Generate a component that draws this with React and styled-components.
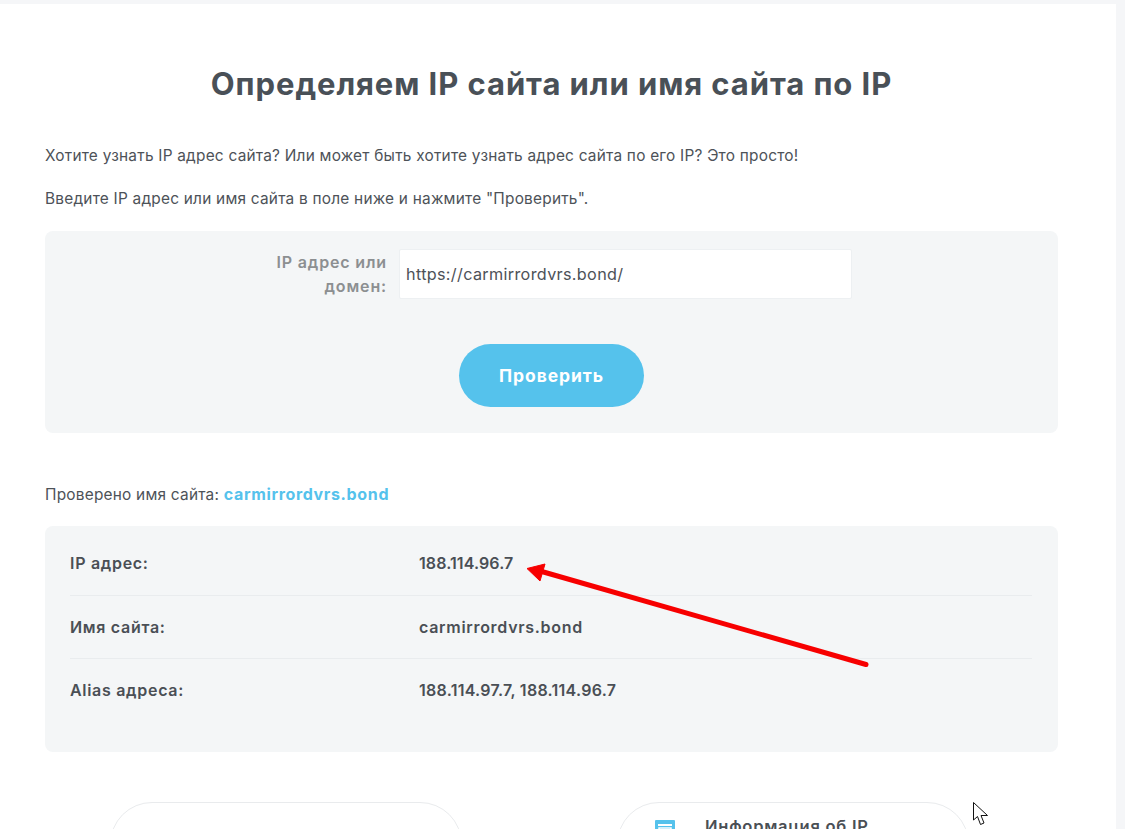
import React from "react";
import styled, { createGlobalStyle } from "styled-components";

const Global = createGlobalStyle`
  html, body { margin: 0; padding: 0; height: 829px; overflow: hidden; background: #f5f6f8; }
  * { box-sizing: border-box; }
`;

const Page = styled.div`
  position: relative;
  width: 1125px;
  height: 829px;
  overflow: hidden;
  padding: 4px 9px 0 0;
  font-family: Inter, "Noto Sans", sans-serif;
  color: #4a4f55;
`;

const Sheet = styled.main`
  background: #fff;
  height: 900px;
  padding: 61px 58px 0 45px;
`;

const Title = styled.h1`
  margin: 0 0 43px;
  text-align: center;
  font-size: 31px;
  letter-spacing: 0.92px;
  line-height: 38px;
  font-weight: 700;
  color: #495057;
`;

const Paragraph = styled.p`
  margin: 0 0 ${(p) => p.$gap || 0}px;
  font-size: 15.4px;
  letter-spacing: 0.23px;
  line-height: 20px;
  color: #4d5258;
`;

const FormPanel = styled.section`
  margin-top: 22px;
  height: 202px;
  background: #f4f6f7;
  border-radius: 8px;
  padding-top: 18px;
  display: flex;
  flex-direction: column;
  align-items: center;
`;

const FieldRow = styled.div`
  width: 100%;
  display: flex;
  align-items: flex-start;
  gap: 12px;
`;

const FieldLabel = styled.label`
  width: 342px;
  text-align: right;
  font-size: 16px;
  letter-spacing: 0.85px;
  line-height: 24px;
  font-weight: 600;
  color: #8c8f91;
  padding: 1px 0 0 200px;
`;

const FieldBox = styled.div`
  width: 453px;
  height: 50px;
  background: #fff;
  border: 1px solid #edf0f2;
  border-radius: 2px;
  padding: 0 6px;
  display: flex;
  align-items: center;
  font-size: 16.2px;
  letter-spacing: 0.33px;
  color: #4d5258;
`;

const SubmitButton = styled.button`
  margin-top: 45px;
  width: 185px;
  height: 63px;
  border: 0;
  border-radius: 32px;
  background: #55c2ec;
  color: #fff;
  font-family: inherit;
  font-size: 17.5px;
  letter-spacing: 0.9px;
  font-weight: 700;
`;

const Checked = styled.p`
  margin: 51px 0 0;
  font-size: 15.4px;
  letter-spacing: 0.23px;
  line-height: 20px;
  color: #4d5258;
`;

const CheckedName = styled.b`
  color: #55c2ec;
  font-size: 16px;
  letter-spacing: 0.65px;
  font-weight: 700;
`;

const ResultPanel = styled.section`
  margin-top: 21px;
  height: 226px;
  background: #f4f6f7;
  border-radius: 8px;
  padding: 6px 26px 0 25px;
`;

const ResultRow = styled.div`
  display: grid;
  grid-template-columns: 349px 1fr;
  align-items: center;
  height: 63.5px;
  border-bottom: 1px solid ${(p) => (p.$last ? "transparent" : "#e9ecee")};
`;

const ResultText = styled.span`
  font-size: 16px;
  font-weight: 600;
  letter-spacing: ${(p) => p.$spacing}px;
  color: #4a4f55;
`;

const Links = styled.div`
  margin: 50px 0 0 65px;
  display: flex;
  gap: 155px;
`;

const LinkCard = styled.div`
  width: 352px;
  height: 120px;
  border: 1px solid #e9ebed;
  border-radius: 42px;
  display: flex;
  align-items: flex-start;
  padding: 13px 0 0 37px;
  gap: 30px;
`;

const LinkIcon = styled.svg`
  margin-top: 4px;
  flex: none;
`;

const LinkText = styled.span`
  font-size: 16.5px;
  letter-spacing: 0.75px;
  line-height: 20px;
  font-weight: 600;
  color: #4a4f55;
`;

const Overlay = styled.svg`
  position: absolute;
  left: 0;
  top: 0;
  pointer-events: none;
`;

const DocIcon = () => (
  <LinkIcon width="20" height="24" viewBox="0 0 20 24" aria-hidden="true">
    <rect x="0" y="0" width="20" height="24" rx="1" fill="#55c2ec" />
    <rect x="3" y="4" width="14" height="2" fill="#fff" />
    <rect x="4" y="8" width="12" height="5" fill="none" stroke="#fff" strokeWidth="1.5" />
  </LinkIcon>
);

export default function App() {
  return (
    <Page>
      <Global />
      <Sheet>
        <Title>Определяем IP сайта или имя сайта по IP</Title>
        <Paragraph $gap={23}>
          Хотите узнать IP адрес сайта? Или может быть хотите узнать адрес сайта по его IP? Это просто!
        </Paragraph>
        <Paragraph>Введите IP адрес или имя сайта в поле ниже и нажмите "Проверить".</Paragraph>
        <FormPanel>
          <FieldRow>
            <FieldLabel>IP адрес или домен:</FieldLabel>
            <FieldBox>https://carmirrordvrs.bond/</FieldBox>
          </FieldRow>
          <SubmitButton>Проверить</SubmitButton>
        </FormPanel>
        <Checked>
          Проверено имя сайта: <CheckedName>carmirrordvrs.bond</CheckedName>
        </Checked>
        <ResultPanel>
          <ResultRow>
            <ResultText $spacing={0.7}>IP адрес:</ResultText>
            <ResultText $spacing={0.1}>188.114.96.7</ResultText>
          </ResultRow>
          <ResultRow>
            <ResultText $spacing={0.7}>Имя сайта:</ResultText>
            <ResultText $spacing={0.7}>carmirrordvrs.bond</ResultText>
          </ResultRow>
          <ResultRow $last>
            <ResultText $spacing={0.7}>Alias адреса:</ResultText>
            <ResultText $spacing={0.27}>188.114.97.7, 188.114.96.7</ResultText>
          </ResultRow>
        </ResultPanel>
        <Links>
          <LinkCard />
          <LinkCard>
            <DocIcon />
            <LinkText>Информация об IP</LinkText>
          </LinkCard>
        </Links>
      </Sheet>
      <Overlay width="1125" height="829" viewBox="0 0 1125 829">
        <path d="M866 664.5 L540 571" stroke="#f70000" strokeWidth="5" strokeLinecap="round" fill="none" />
        <path d="M527 568.5 L545 564 L540 581 Z" fill="#f70000" stroke="#f70000" strokeWidth="1" strokeLinejoin="round" />
        <path d="M973.5 802.5 V820 L977.5 816.5 L980.5 824.5 L984 823 L981 815.5 L987.5 815.5 Z" fill="#fff" stroke="#111" strokeWidth="1" />
      </Overlay>
    </Page>
  );
}
